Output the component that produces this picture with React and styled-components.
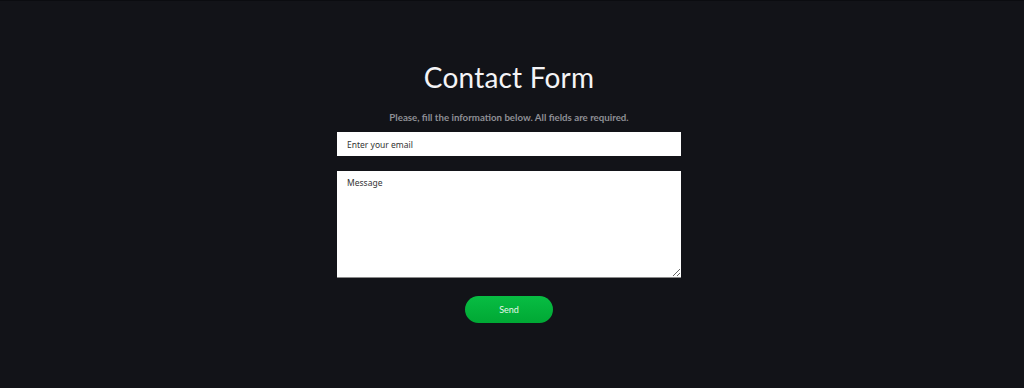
import React from "react";
import styled, { createGlobalStyle } from "styled-components";

const GlobalStyle = createGlobalStyle`
  html, body {
    margin: 0;
    padding: 0;
    background-color: #121318;
  }
  body {
    font-family: Lato, "Noto Sans", sans-serif;
  }
`;

const Page = styled.main`
  min-height: 388px;
  box-sizing: border-box;
  border-top: 1px solid #0b0c10;
  display: flex;
  flex-direction: column;
  align-items: center;
  padding: 58px 6px 0 0;
`;

const Title = styled.h1`
  margin: 0;
  font-size: 28px;
  font-weight: 400;
  line-height: 36px;
  color: #f4f4f6;
  letter-spacing: 0.2px;
`;

const Subtitle = styled.p`
  margin: 15px 0 8px;
  font-size: 9.7px;
  font-weight: 700;
  line-height: 14px;
  color: #8e8f95;
`;

const Form = styled.form`
  width: 344px;
  display: flex;
  flex-direction: column;
  align-items: center;
`;

const Field = styled.input`
  width: 100%;
  height: 24px;
  box-sizing: border-box;
  border: none;
  outline: none;
  padding: 0 10px;
  font-family: "Noto Sans", sans-serif;
  font-size: 8.5px;
  color: #222;
  background: #fff;

  &::placeholder {
    color: #333;
  }
`;

const MessageBox = styled.textarea`
  width: 100%;
  height: 107px;
  margin-top: 15px;
  box-sizing: border-box;
  border: none;
  border-bottom: 1px solid #8a8a8a;
  outline: none;
  padding: 6px 10px;
  resize: vertical;
  font-family: "Noto Sans", sans-serif;
  font-size: 8.5px;
  color: #222;
  background: #fff;

  &::placeholder {
    color: #333;
  }
`;

const SendButton = styled.button`
  margin-top: 18px;
  width: 88px;
  height: 27px;
  border: none;
  border-radius: 14px;
  background: linear-gradient(180deg, #08bd43 0%, #00a834 100%);
  color: #e9f7ec;
  font-family: Lato, sans-serif;
  font-size: 9px;
  cursor: pointer;
`;

export default function App() {
  return (
    <>
      <GlobalStyle />
      <Page>
        <Title>Contact Form</Title>
        <Subtitle>Please, fill the information below. All fields are required.</Subtitle>
        <Form onSubmit={(e) => e.preventDefault()}>
          <Field type="email" placeholder="Enter your email" />
          <MessageBox placeholder="Message" />
          <SendButton type="submit">Send</SendButton>
        </Form>
      </Page>
    </>
  );
}
